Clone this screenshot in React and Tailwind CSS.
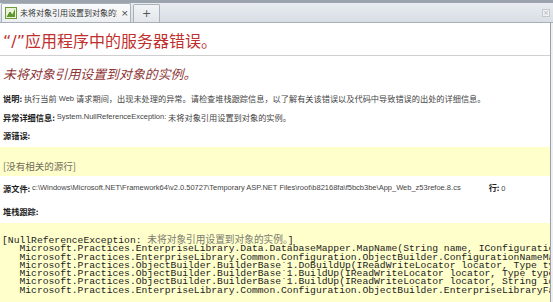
import React from 'react';

const L = ({ children }) => (
  <span className="font-['Liberation_Sans',sans-serif] text-[7.5px]">{children}</span>
);

const stack = [
  '   Microsoft.Practices.EnterpriseLibrary.Data.DatabaseMapper.MapName(String name, IConfigurationSource configSource) +53',
  '   Microsoft.Practices.EnterpriseLibrary.Common.Configuration.ObjectBuilder.ConfigurationNameMapperStrategy.PreBuildUp(IBuilderContext context)',
  '   Microsoft.Practices.ObjectBuilder.BuilderBase`1.DoBuildUp(IReadWriteLocator locator, Type typeToBuild, String idToBuild, Object existing)',
  '   Microsoft.Practices.ObjectBuilder.BuilderBase`1.BuildUp(IReadWriteLocator locator, Type typeToBuild, String idToBuild, Object existing)',
  '   Microsoft.Practices.ObjectBuilder.BuilderBase`1.BuildUp(IReadWriteLocator locator, String idToBuild, Object existing, PolicyList[] policies)',
  '   Microsoft.Practices.EnterpriseLibrary.Common.Configuration.ObjectBuilder.EnterpriseLibraryFactory.BuildUp(IReadWriteLocator locator)',
];

const Favicon = () => (
  <svg width="12" height="12" viewBox="0 0 12 12" className="shrink-0">
    <rect x="0.5" y="0.5" width="11" height="11" fill="#e9f3d6" stroke="#6f9a3a" />
    <path d="M2 10 L5 5 L7 8 L10 2 L10 10 Z" fill="#5e9a2a" />
    <path d="M2 10 L5 5 L7 8" fill="none" stroke="#3f7a1a" strokeWidth="0.8" />
  </svg>
);

const App = () => {
  return (
    <div className="w-[553px] h-[302px] overflow-hidden bg-white flex flex-col font-['Noto_Sans_CJK_SC',sans-serif]">
      {/* window frame + tabs */}
      <div className="h-[3px] bg-[#9ba3ad] shrink-0" />
      <div className="h-[20px] shrink-0 flex items-end bg-gradient-to-b from-[#e8ecf0] to-[#d8dee5] border-b border-[#a7afb8] pl-[1px] pr-[3px]">
        <div className="h-[19px] w-[130px] flex items-center gap-[3px] pl-[3px] bg-gradient-to-b from-[#fafbfc] to-[#eceff2] border border-b-0 border-[#a9b1ba] rounded-t-[2px]">
          <Favicon />
          <span className="text-[8px] text-[#333] whitespace-nowrap overflow-hidden w-[97px] leading-[10px]">未将对象引用设置到对象的实</span>
          <span className="ml-[1px] text-[9px] text-[#444] leading-none font-['DejaVu_Sans',sans-serif]">×</span>
        </div>
        <div className="h-[18px] w-[27px] ml-[2px] flex items-center justify-center bg-gradient-to-b from-[#f2f4f6] to-[#e2e6ea] border border-b-0 border-[#a9b1ba] rounded-t-[2px]">
          <span className="text-[11px] text-[#555] leading-none font-['DejaVu_Sans',sans-serif]">+</span>
        </div>
        <div className="flex-1" />
        <div className="mb-[5px] w-[8px] h-[8px] border border-[#c4c9cf] bg-[#eef0f2] flex items-center justify-center">
          <span className="text-[7px] text-[#b0b5ba] leading-none font-['DejaVu_Sans',sans-serif]">×</span>
        </div>
      </div>

      <div className="flex-1 flex min-h-0">
        <div className="w-[550px] overflow-hidden text-[#444]">
          {/* heading */}
          <h1 className="mt-[6px] h-[26px] flex items-center pl-[3px] text-[16px] text-[#c0302e] whitespace-nowrap font-['DejaVu_Sans','Noto_Sans_CJK_SC',sans-serif]">
            “/”应用程序中的服务器错误。
          </h1>
          <div className="border-t border-[#cfcfcf]" />
          <h2 className="mt-[9px] h-[18px] flex items-center pl-[3px] text-[12.9px] italic text-[#8e3636] whitespace-nowrap">
            未将对象引用设置到对象的实例。
          </h2>

          <div className="mt-[6px] text-[8.2px] whitespace-nowrap">
            <div className="h-[19px] flex items-center pl-[3px]">
              <b className="text-[#222]">说明:</b>&nbsp;执行当前 <L>&nbsp;Web&nbsp;</L> 请求期间，出现未处理的异常。请检查堆栈跟踪信息，以了解有关该错误以及代码中导致错误的出处的详细信息。
            </div>
            <div className="h-[18px] flex items-center pl-[3px]">
              <b className="text-[#222]">异常详细信息:</b>&nbsp;<L>System.NullReferenceException:</L>&nbsp;未将对象引用设置到对象的实例。
            </div>
            <div className="h-[18px] flex items-center pl-[3px]">
              <b className="text-[#222]">源错误:</b>
            </div>
          </div>

          <div className="mt-[3px] h-[29px] bg-[#ffffcc] flex items-end pb-[5px] pl-[3px]">
            <span className="text-[9.5px] text-[#6f6b58] leading-none">[没有相关的源行]</span>
          </div>

          <div className="mt-[3px] text-[8.2px] whitespace-nowrap">
            <div className="h-[18px] flex items-center pl-[3px]">
              <b className="text-[#222]">源文件:</b>&nbsp;<L>c:\Windows\Microsoft.NET\Framework64\v2.0.50727\Temporary ASP.NET Files\root\b82168fa\f5bcb3be\App_Web_z53refoe.8.cs</L>
              <span className="ml-[28px]"><b className="text-[#222]">行:</b>&nbsp;<L>0</L></span>
            </div>
            <div className="mt-[5px] h-[18px] flex items-center pl-[3px]">
              <b className="text-[#222]">堆栈跟踪:</b>
            </div>
          </div>

          <div className="mt-[3px] h-[100px] bg-[#ffffcc] pt-[14px] pl-[2px] text-[#222] font-['Liberation_Mono','Noto_Sans_CJK_SC',monospace] text-[9.7px] leading-[8.3px] whitespace-pre">
            <div>
              [NullReferenceException: <span className="text-[#7a7a70]">未将对象引用设置到对象的实例。</span>]
            </div>
            {stack.map((line) => (
              <div key={line}>{line}</div>
            ))}
          </div>
        </div>
        <div className="w-[3px] border-l border-[#9aa0a6] bg-[#eef0f2]" />
      </div>
    </div>
  );
};

export default App;
